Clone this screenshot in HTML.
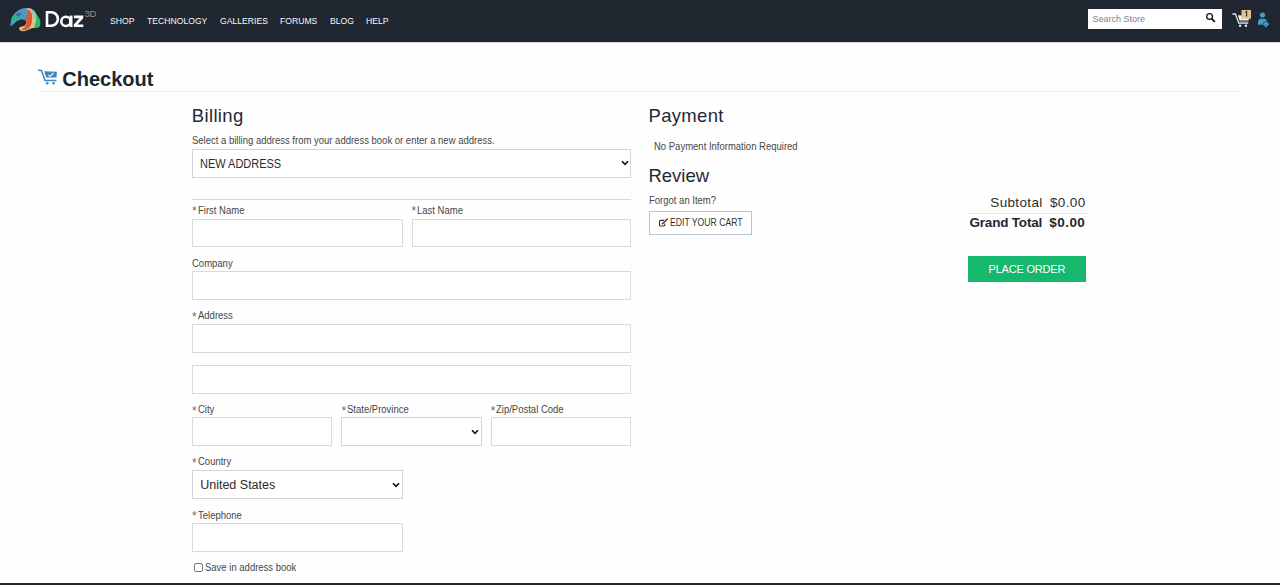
<!DOCTYPE html>
<html><head><meta charset="utf-8">
<style>
*{box-sizing:border-box;margin:0;padding:0}
html,body{width:1280px;height:585px;overflow:hidden;background:#fefefe;font-family:"Liberation Sans",sans-serif;color:#333}
.t{position:absolute;white-space:nowrap}
#nav{position:absolute;left:0;top:0;width:1280px;height:42px;background:#212730}
.nv{position:absolute;top:15.9px;font-size:9.8px;line-height:9.8px;color:#f6f7f9;white-space:nowrap;transform:scaleX(0.88);transform-origin:0 0}
#search{position:absolute;left:1088px;top:9px;width:134px;height:20px;background:#fff}
#foot{position:absolute;left:0;top:583px;width:1280px;height:2px;background:#212730}
.h2{position:absolute;font-size:18.5px;line-height:18.5px;color:#1e2935;white-space:nowrap}
.sm{position:absolute;margin-top:1px;font-size:10px;line-height:10px;color:#474747;white-space:nowrap;transform:scaleX(0.95);transform-origin:0 0}
.ast{position:absolute;margin-top:-1.0px;margin-left:0px;font-size:12px;line-height:12px;color:#7f6651;white-space:nowrap}
.inp{position:absolute;border:1px solid #d9dadb;background:#fff;height:29px}
.sel{position:absolute;border:1px solid #d4d5d6;background:#fff;height:29px}
.chev{position:absolute;width:8px;height:6px}
</style></head><body>
<div id="nav">
  <svg style="position:absolute;left:0;top:0" width="100" height="42" viewBox="0 0 100 42">
    <path d="M26 8.1 L31 8.6 L34 11 L36.5 15 L38.5 18 L40 20.5 L40.2 24.5 L38.8 27.2 L34.5 27.8 L31 28.6 L27 30.2 L24 31.2 L21 31 L19.2 29.6 L19.2 27.6 L21.5 26.6 L24.5 26 L26.3 23 L26.3 20.5 L23 19.8 L26.5 17.5 L28 12 Z" fill="#e5bd8a"/>
    <path d="M31 9 L34 10.5 L36.5 14.5 L38.6 18.2 L35.8 18.6 L33.8 17.7 L32.5 13.5 Z" fill="#7fd3b4"/>
    <path d="M36.2 16 L39.2 18 L40.2 21 L40.1 25 L38.6 27.2 L34.3 27.3 L35.9 22 Z" fill="#1fbf6b"/>
    <path d="M28 10 L30 10.6 L31.8 14 L32.2 18 L31.7 23 L30 27 L26.6 29.7 L23.5 30 L22 30.6 L21.5 29.4 L24.3 28 L25.6 25.8 L26.6 22.6 L26 20.4 L22.8 19.6 L26 17.1 L27.7 13.3 Z" fill="#df552d"/>
    <path d="M10.2 26.4 L10.6 23.5 L11.2 20 L12.5 16.5 L15.1 12.7 L18.9 10 L22.2 8.6 L26 8.1 L28.2 10.2 L28 13 L26.6 17.2 L24.4 19 L20.6 19.6 L16.2 21.5 L12.9 24.8 Z" fill="#4b9bc7"/>
    <path d="M11 19.5 L12.3 16.5 L15 14.8 L18 15 L19.8 16.5 L17.5 18.8 L13.5 20 Z" fill="#20bf6b"/>
    <path d="M15.5 14.2 L19.5 12.6 L21.8 13.4 L19.5 16.5 L17 16.2 Z" fill="#3e6d9b"/>
  </svg>
  <svg style="position:absolute;left:40px;top:8px" width="48" height="24" viewBox="40 8 48 24">
    <path d="M47 12.3 H51.2 A6.7 6.7 0 0 1 51.2 25.7 H47 Z" fill="none" stroke="#fff" stroke-width="2.6"/>
    <circle cx="65.9" cy="21.4" r="4.6" fill="none" stroke="#fff" stroke-width="2.6"/>
    <rect x="69.6" y="15.6" width="2.9" height="11.4" fill="#fff"/>
    <path d="M73.9 15.6 H83.2 V18.2 L77.6 24.4 H83.3 V27 H73.8 V24.5 L79.4 18.2 H73.9 Z" fill="#fff"/>
  </svg>
  <div class="t" style="left:84.5px;top:9.3px;font-size:9.5px;line-height:9.5px;color:#a68d7c;letter-spacing:-0.3px">3D</div>
  <div class="nv" style="left:109.5px">SHOP</div>
  <div class="nv" style="left:147px">TECHNOLOGY</div>
  <div class="nv" style="left:220px">GALLERIES</div>
  <div class="nv" style="left:279.5px">FORUMS</div>
  <div class="nv" style="left:330px">BLOG</div>
  <div class="nv" style="left:366px">HELP</div>
  <div id="search"></div>
  <div class="t" style="left:1092.5px;top:15.2px;font-size:9px;line-height:9px;color:#7b828b">Search Store</div>
  <svg style="position:absolute;left:1200px;top:8px" width="80" height="26" viewBox="1200 8 80 26">
    <circle cx="1209.6" cy="16.5" r="2.9" fill="none" stroke="#151515" stroke-width="1.3"/>
    <path d="M1211.9 18.8 L1214.4 21.4" stroke="#151515" stroke-width="1.8" stroke-linecap="round"/>
    <path d="M1232.3 14.2 L1235.4 13.8 L1238.8 23.2 L1248.2 23.2" fill="none" stroke="#e9edf1" stroke-width="1.2" stroke-linejoin="round"/>
    <path d="M1238 15.3 L1249.5 15.8 L1248.6 20.6 L1239.5 20.6 Z" fill="#eef1f4"/>
    <path d="M1239.6 22 L1248.3 22" stroke="#b9c3cd" stroke-width="0.9"/>
    <circle cx="1240.1" cy="25.8" r="1.2" fill="#e9edf1"/>
    <circle cx="1245.9" cy="25.8" r="1.2" fill="#e9edf1"/>
    <rect x="1241.5" y="10" width="9.5" height="8.7" fill="#e0c28e"/>
    <path d="M1245.2 12 L1246.6 11.5 L1246.6 16.5" fill="none" stroke="#2e2a24" stroke-width="1.1"/>
    <circle cx="1262.5" cy="15" r="2.6" fill="#3f9dcc"/>
    <path d="M1258 24.8 L1258 21.6 Q1258.2 18.8 1261 18.7 L1264 18.7 Q1266 18.9 1267.2 20.2 L1262.3 24.8 Z" fill="#3f9dcc"/>
    <path d="M1266 20.6 L1269.6 24.1 L1266 27.8 L1262.4 24.2 Z" fill="#3f9dcc" stroke="#21262e" stroke-width="0.7"/>
    <path d="M1264.8 24.3 L1265.8 25.3 L1267.4 23.4" fill="none" stroke="#2b6f93" stroke-width="0.6"/>
  </svg>
</div>

<!-- Checkout heading -->
<svg style="position:absolute;left:34px;top:64px" width="28" height="26" viewBox="34 64 28 26">
  <path d="M38.7 70.2 L41.5 70.5 L45 80.4 L55.8 80.4" fill="none" stroke="#3b89b9" stroke-width="1.5" stroke-linejoin="round" stroke-linecap="round"/>
  <path d="M44.3 71.3 L57 71.8 L56.5 77.6 L46.2 77.6 Z" fill="#3b89b9"/>
  <path d="M48.5 75 L50 76.3 L53.5 73" fill="none" stroke="#fff" stroke-width="1.1"/>
  <circle cx="47.2" cy="83.3" r="1.3" fill="#3b89b9"/>
  <circle cx="53.6" cy="83.3" r="1.3" fill="#3b89b9"/>
</svg>
<div class="t" style="left:62.3px;top:68.7px;font-size:20px;line-height:20px;font-weight:bold;color:#1b2631">Checkout</div>
<div style="position:absolute;left:38px;top:91px;width:1204px;height:1px;background:#efefef"></div>

<!-- Billing -->
<div class="h2" style="left:191.8px;top:106.9px;letter-spacing:0.35px">Billing</div>
<div class="sm" style="left:192px;top:135px">Select a billing address from your address book or enter a new address.</div>
<div class="sel" style="left:192px;top:149px;width:439px"></div>
<div class="t" style="left:199.7px;top:158px;font-size:12px;line-height:12px;color:#2b2b2b;transform:scaleX(0.915);transform-origin:0 0">NEW ADDRESS</div>
<svg class="chev" style="left:620.5px;top:160px" viewBox="0 0 8 6"><path d="M1 1.2 L4 4.3 L7 1.2" fill="none" stroke="#111" stroke-width="1.6"/></svg>
<div style="position:absolute;left:192px;top:199px;width:439px;height:1px;background:#d3dce4"></div>

<div class="ast" style="left:192px;top:206.3px">*</div>
<div class="sm" style="left:198px;top:204.8px">First Name</div>
<div class="inp" style="left:192px;top:219px;width:211px;height:28px"></div>
<div class="ast" style="left:411.5px;top:206.3px">*</div>
<div class="sm" style="left:417.3px;top:204.8px">Last Name</div>
<div class="inp" style="left:411.5px;top:219px;width:219.5px;height:28px"></div>

<div class="sm" style="left:192px;top:258.2px">Company</div>
<div class="inp" style="left:192px;top:271px;width:439px"></div>
<div class="ast" style="left:192px;top:311.7px">*</div>
<div class="sm" style="left:198px;top:310.2px">Address</div>
<div class="inp" style="left:192px;top:324px;width:439px"></div>
<div class="inp" style="left:192px;top:365px;width:439px"></div>

<div class="ast" style="left:192px;top:405.7px">*</div>
<div class="sm" style="left:198px;top:404.2px">City</div>
<div class="inp" style="left:192px;top:417px;width:140px"></div>
<div class="ast" style="left:341.5px;top:405.7px">*</div>
<div class="sm" style="left:347px;top:404.2px">State/Province</div>
<div class="sel" style="left:341px;top:417px;width:140.5px"></div>
<svg class="chev" style="left:470.8px;top:428.7px" viewBox="0 0 8 6"><path d="M1 1.2 L4 4.3 L7 1.2" fill="none" stroke="#111" stroke-width="1.6"/></svg>
<div class="ast" style="left:490.8px;top:405.7px">*</div>
<div class="sm" style="left:496.3px;top:404.2px">Zip/Postal Code</div>
<div class="inp" style="left:490.5px;top:417px;width:140.5px"></div>

<div class="ast" style="left:192px;top:457.9px">*</div>
<div class="sm" style="left:198px;top:456.4px">Country</div>
<div class="sel" style="left:192px;top:470.4px;width:211px;height:28.2px"></div>
<div class="t" style="left:200.2px;top:478.7px;font-size:12.5px;line-height:12.5px;color:#2b2b2b">United States</div>
<svg class="chev" style="left:392.2px;top:481.8px" viewBox="0 0 8 6"><path d="M1 1.2 L4 4.3 L7 1.2" fill="none" stroke="#111" stroke-width="1.6"/></svg>

<div class="ast" style="left:192px;top:511.2px">*</div>
<div class="sm" style="left:198px;top:509.7px">Telephone</div>
<div class="inp" style="left:192px;top:523px;width:211px;height:29px"></div>
<div style="position:absolute;left:194px;top:563.3px;width:9px;height:9px;border:1px solid #7a7a7a;border-radius:2px;background:#fff"></div>
<div class="sm" style="left:205.3px;top:562.3px">Save in address book</div>

<!-- Payment / Review -->
<div class="h2" style="left:648.6px;top:106.9px;letter-spacing:0.3px">Payment</div>
<div class="sm" style="left:653.5px;top:141px">No Payment Information Required</div>
<div class="h2" style="left:648.4px;top:166.8px">Review</div>
<div class="sm" style="left:648.5px;top:194.6px">Forgot an Item?</div>
<div style="position:absolute;left:649px;top:211px;width:102.5px;height:23.5px;border:1px solid #b9c6d1;background:#fff"></div>
<svg style="position:absolute;left:656px;top:216px" width="14" height="14" viewBox="656 216 14 14">
  <path d="M664 220.4 H660.5 Q659.5 220.4 659.5 221.4 V225 Q659.5 226 660.5 226 H663.8 Q664.8 226 664.8 225 V223.6" fill="none" stroke="#3a3330" stroke-width="1.1"/>
  <path d="M662 224.2 L667.6 218.8" stroke="#3a3330" stroke-width="1.4"/>
</svg>
<div class="t" style="left:669.6px;top:217.5px;font-size:10.2px;line-height:10.2px;color:#333;transform:scaleX(0.85);transform-origin:0 0">EDIT YOUR CART</div>

<!-- Totals -->
<div class="t" style="left:990.3px;top:196px;font-size:13.5px;line-height:13.5px;color:#2d2d2d;letter-spacing:0.35px">Subtotal</div>
<div class="t" style="left:1050px;top:196px;font-size:13.5px;line-height:13.5px;color:#2d2d2d;letter-spacing:0.35px">$0.00</div>
<div style="position:absolute;left:967px;top:212.5px;width:121px;height:1px;background:#e6e6e6"></div>
<div class="t" style="left:969.5px;top:215.7px;font-size:13.5px;line-height:13.5px;color:#1e2630;font-weight:bold;letter-spacing:-0.2px">Grand Total</div>
<div class="t" style="left:1049.3px;top:215.7px;font-size:13.5px;line-height:13.5px;color:#1e2630;font-weight:bold;letter-spacing:0.45px">$0.00</div>
<div style="position:absolute;left:968px;top:256px;width:118px;height:26px;background:#16b86e"></div>
<div class="t" style="left:988.5px;top:263.9px;font-size:11px;line-height:11px;color:#fff;letter-spacing:-0.2px">PLACE ORDER</div>

<div id="foot"></div>
<div style="position:absolute;left:0;top:42px;width:1280px;height:1px;background:#d6d8da"></div>
</body></html>
